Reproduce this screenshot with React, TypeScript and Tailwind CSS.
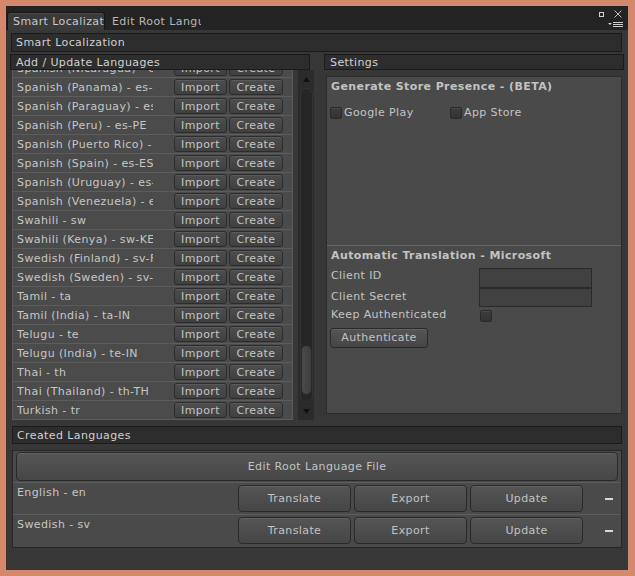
import React from "react";

const rows = [
  "Spanish (Nicaragua) - es-NI",
  "Spanish (Panama) - es-PA",
  "Spanish (Paraguay) - es-PY",
  "Spanish (Peru) - es-PE",
  "Spanish (Puerto Rico) - es-PR",
  "Spanish (Spain) - es-ES",
  "Spanish (Uruguay) - es-UY",
  "Spanish (Venezuela) - es-VE",
  "Swahili - sw",
  "Swahili (Kenya) - sw-KE",
  "Swedish (Finland) - sv-FI",
  "Swedish (Sweden) - sv-SE",
  "Tamil - ta",
  "Tamil (India) - ta-IN",
  "Telugu - te",
  "Telugu (India) - te-IN",
  "Thai - th",
  "Thai (Thailand) - th-TH",
  "Turkish - tr",
];

function SmallBtn({ label }: { label: string }) {
  return (
    <div className="h-[16px] pt-[1px] flex items-center justify-center rounded-[3px] border border-[#2c2c2c] bg-gradient-to-b from-[#4d4d4d] to-[#404040] text-[#c4c4c4] shadow-[inset_0_1px_0_#5a5a5a] leading-none">
      {label}
    </div>
  );
}

function BigBtn({ label, w }: { label: string; w: string }) {
  return (
    <div
      className={`${w} h-[27px] pt-[1px] flex items-center justify-center rounded-[4px] border border-[#2a2a2a] bg-gradient-to-b from-[#555555] to-[#464646] text-[#c2c2c2] shadow-[inset_0_1px_0_#626262]`}
    >
      {label}
    </div>
  );
}

function Checkbox() {
  return (
    <div className="w-[12px] h-[12px] shrink-0 rounded-[2px] border border-[#2a2a2a] bg-gradient-to-b from-[#3c3c3c] to-[#333333] shadow-[inset_0_1px_0_#4a4a4a]" />
  );
}

export default function App() {
  return (
    <div
      className="w-[635px] h-[576px] bg-[#d4896e] pl-[6px] pt-[6px] pr-[7px] pb-[6px] text-[11px] tracking-[0.4px] text-[#c4c4c4]"
      style={{ fontFamily: '"DejaVu Sans", Verdana, sans-serif' }}
    >
      <div className="w-full h-full bg-[#373737] flex flex-col">
        {/* tab bar */}
        <div className="relative h-[24px] bg-[#232323] flex items-end shrink-0">
          <div className="ml-[1px] w-[98px] h-[18px] pt-[2px] bg-[#3a3a3a] rounded-t-[3px] border border-b-0 border-[#161616] pl-[5px] flex items-center overflow-hidden whitespace-nowrap text-[#c8c8c8] shadow-[inset_0_1px_0_#4a4a4a]">
            Smart Localizat
          </div>
          <div className="w-[96px] h-[18px] pt-[2px] pl-[7px] flex items-center overflow-hidden whitespace-nowrap text-[#b8b8b8]">
            Edit Root Langu
          </div>
          {/* window icons */}
          <div className="absolute right-[6px] top-[4px] flex items-center gap-[10px]">
            <div className="w-[5px] h-[5px] border border-[#d0d0d0] bg-[#222]" />
            <svg width="8" height="8" viewBox="0 0 8 8">
              <path d="M0.5 0.5 L7.5 7.5 M7.5 0.5 L0.5 7.5" stroke="#bdbdbd" strokeWidth="1" />
            </svg>
          </div>
          <div className="absolute right-[5px] top-[16px]">
            <svg width="15" height="6" viewBox="0 0 15 6">
              <path d="M0 1 L4 1 L2 3 Z" fill="#cfcfcf" />
              <rect x="5" y="0" width="10" height="1" fill="#cfcfcf" />
              <rect x="5" y="2" width="10" height="1" fill="#cfcfcf" />
              <rect x="5" y="4" width="10" height="1" fill="#cfcfcf" />
            </svg>
          </div>
        </div>

        {/* content */}
        <div className="flex flex-col">
          <div className="mt-[3px] ml-[5px] mr-[6px] h-[19px] pt-[2px] bg-[#2d2d2d] border border-[#1b1b1b] pl-[4px] flex items-center text-[#d0d0d0]">
            Smart Localization
          </div>

          <div className="mt-[2px] flex">
            {/* left column */}
            <div className="ml-[4px] w-[305px] flex flex-col">
              <div className="w-[300px] h-[16px] pt-[2px] bg-[#2d2d2d] border border-[#1b1b1b] pl-[5px] flex items-center text-[#d0d0d0]">
                Add / Update Languages
              </div>
              <div className="flex h-[350px]">
                <div className="ml-[2px] w-[281px] h-full overflow-hidden bg-[#4b4b4b] border-x border-[#5a5a5a]">
                  <div className="-mt-[11px]">
                    {rows.map((r) => (
                      <div key={r} className="h-[19px] border-b border-[#5c5c5c] flex items-center">
                        <div className="ml-[4px] pt-[2px] w-[136px] overflow-hidden whitespace-nowrap text-[#c6c6c6]">{r}</div>
                        <div className="ml-[21px] w-[53px]">
                          <SmallBtn label="Import" />
                        </div>
                        <div className="ml-[2px] w-[54px]">
                          <SmallBtn label="Create" />
                        </div>
                      </div>
                    ))}
                  </div>
                </div>
                {/* scrollbar */}
                <div className="ml-[5px] w-[16px] h-full bg-[#2b2b2b] flex flex-col items-center">
                  <div className="h-[18px] flex items-center justify-center">
                    <svg width="7" height="5" viewBox="0 0 7 5">
                      <path d="M0 5 L3.5 0 L7 5 Z" fill="#111" />
                    </svg>
                  </div>
                  <div className="w-[13px] flex-1 rounded-[6px] bg-[#262626] border border-[#333] flex flex-col justify-end pb-[6px]">
                    <div className="w-[11px] h-[50px] rounded-[6px] bg-gradient-to-r from-[#4a4a4a] to-[#3e3e3e] border border-[#2a2a2a]" />
                  </div>
                  <div className="h-[18px] flex items-center justify-center">
                    <svg width="7" height="5" viewBox="0 0 7 5">
                      <path d="M0 0 L3.5 5 L7 0 Z" fill="#111" />
                    </svg>
                  </div>
                </div>
              </div>
            </div>

            {/* right column */}
            <div className="ml-[9px] w-[300px] flex flex-col">
              <div className="w-[300px] h-[16px] pt-[2px] bg-[#2d2d2d] border border-[#1b1b1b] pl-[5px] flex items-center text-[#d0d0d0]">
                Settings
              </div>
              <div className="mt-[6px] ml-[2px] w-[296px] h-[338px] bg-[#4a4a4a] border border-[#2c2c2c] flex flex-col">
                <div className="h-[168px] flex flex-col">
                  <div className="mt-[3px] ml-[4px] h-[14px] flex items-center font-bold text-[#c2c2c2]">
                    Generate Store Presence - (BETA)
                  </div>
                  <div className="mt-[12px] ml-[3px] flex items-center h-[14px]">
                    <Checkbox />
                    <span className="ml-[2px] w-[106px]">Google Play</span>
                    <Checkbox />
                    <span className="ml-[2px]">App Store</span>
                  </div>
                </div>
                <div className="h-[1px] bg-[#666666]" />
                <div className="flex flex-col">
                  <div className="mt-[3px] ml-[4px] h-[14px] flex items-center font-bold text-[#c2c2c2]">
                    Automatic Translation - Microsoft
                  </div>
                  <div className="mt-[5px] flex items-center h-[20px]">
                    <span className="ml-[4px] w-[148px] -mt-[3px]">Client ID</span>
                    <div className="w-[113px] h-[20px] bg-[#414141] border border-[#2a2a2a]" />
                  </div>
                  <div className="flex items-center h-[19px]">
                    <span className="ml-[4px] w-[148px] -mt-[1px]">Client Secret</span>
                    <div className="w-[113px] h-[19px] bg-[#414141] border border-[#2a2a2a]" />
                  </div>
                  <div className="mt-[1px] flex items-center h-[16px]">
                    <span className="ml-[4px] w-[149px] -mt-[1px]">Keep Authenticated</span>
                    <Checkbox />
                  </div>
                  <div className="mt-[4px] ml-[3px] w-[98px] h-[20px] flex items-center justify-center rounded-[3px] border border-[#2a2a2a] bg-gradient-to-b from-[#555555] to-[#464646] text-[#c2c2c2] shadow-[inset_0_1px_0_#626262]">
                    Authenticate
                  </div>
                </div>
              </div>
            </div>
          </div>

          {/* Created languages */}
          <div className="mt-[6px] ml-[6px] mr-[6px] h-[18px] pt-[2px] bg-[#2d2d2d] border border-[#1b1b1b] pl-[4px] flex items-center text-[#d0d0d0]">
            Created Languages
          </div>
          <div className="mt-[6px] ml-[6px] mr-[6px] h-[98px] bg-[#4a4a4a] border border-[#262626] flex flex-col">
            <div className="mt-[1px] mx-[3px] h-[29px] pt-[1px] flex items-center justify-center rounded-[4px] border border-[#2a2a2a] bg-gradient-to-b from-[#555555] to-[#474747] text-[#c2c2c2] shadow-[inset_0_1px_0_#626262]">
              Edit Root Language File
            </div>
            <div className="mt-[1px] h-[1px] bg-[#5e5e5e]" />
            {["English - en", "Swedish - sv"].map((l, i) => (
              <React.Fragment key={l}>
                {i > 0 && <div className="h-[1px] bg-[#5e5e5e]" />}
                <div className="h-[31px] flex">
                  <div className="ml-[4px] w-[221px] pt-[2px] text-[#c6c6c6]">{l}</div>
                  <div className="mt-[2px] flex gap-[3px]">
                    <BigBtn label="Translate" w="w-[113px]" />
                    <BigBtn label="Export" w="w-[113px]" />
                    <BigBtn label="Update" w="w-[113px]" />
                  </div>
                  <div className="ml-[22px] mt-[15px] w-[8px] h-[2px] bg-[#d8d8d8]" />
                </div>
              </React.Fragment>
            ))}
          </div>
        </div>
      </div>
    </div>
  );
}
